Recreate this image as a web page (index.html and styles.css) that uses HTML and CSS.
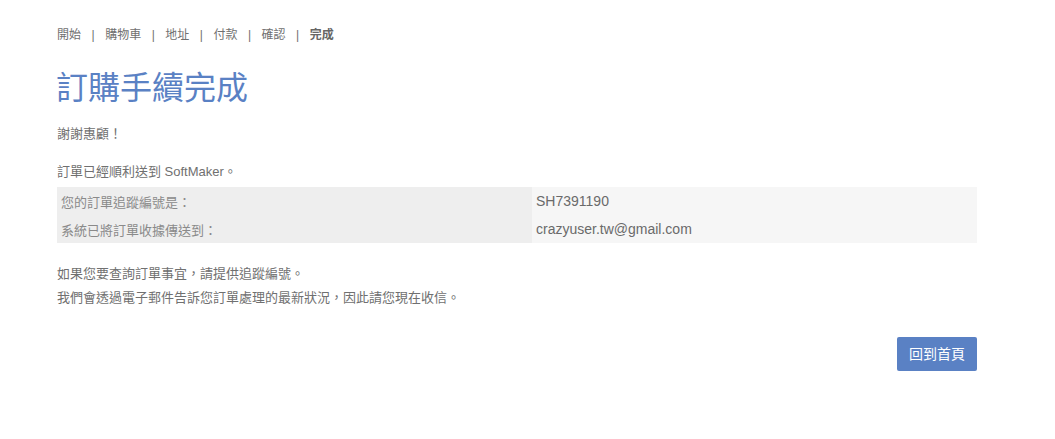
FILE: index.html
```html
<!DOCTYPE html>
<html lang="zh-Hant">
<head>
<meta charset="utf-8">
<title>訂購手續完成</title>
<link rel="stylesheet" href="styles.css">
</head>
<body>
<div class="page">
  <nav class="crumbs">
    <span>開始</span><span class="sep">|</span>
    <span>購物車</span><span class="sep">|</span>
    <span>地址</span><span class="sep">|</span>
    <span>付款</span><span class="sep">|</span>
    <span>確認</span><span class="sep">|</span>
    <span class="current">完成</span>
  </nav>
  <h1 class="title">訂購手續完成</h1>
  <p class="thanks">謝謝惠顧！</p>
  <p class="sent">訂單已經順利送到 SoftMaker。</p>
  <table class="info">
    <tr><td class="label">您的訂單追蹤編號是：</td><td class="value">SH7391190</td></tr>
    <tr><td class="label">系統已將訂單收據傳送到：</td><td class="value">crazyuser.tw@gmail.com</td></tr>
  </table>
  <p class="note">如果您要查詢訂單事宜，請提供追蹤編號。<br>我們會透過電子郵件告訴您訂單處理的最新狀況，因此請您現在收信。</p>
  <div class="actions"><a class="btn" href="#">回到首頁</a></div>
</div>
</body>
</html>
```

FILE: styles.css
```css
html, body {
  margin: 0;
  padding: 0;
  background: #fff;
}
body {
  font-family: "Liberation Sans", "Noto Sans CJK TC", sans-serif;
  color: #707070;
  font-size: 13px;
}
.page {
  width: 920px;
  margin-left: 57px;
  padding-top: 27px;
}
.crumbs {
  font-size: 12px;
  line-height: 16px;
  color: #707070;
  display: flex;
}
.crumbs .sep {
  margin: 0 10.5px;
}
.crumbs .current {
  font-weight: bold;
  color: #666;
}
.title {
  margin: 25px 0 0 -1px;
  font-size: 32px;
  line-height: 40px;
  font-weight: normal;
  color: #5a81c4;
}
.thanks {
  margin: 17px 0 0;
  line-height: 18px;
}
.sent {
  margin: 20px 0 0;
  line-height: 18px;
}
.info {
  margin-top: 6px;
  width: 920px;
  border-collapse: collapse;
}
.info td {
  height: 28px;
  padding: 0 4px;
  vertical-align: middle;
}
.info .label {
  width: 467px;
  background: #eeeeee;
  color: #8a8a8a;
}
.info .value {
  background: #f6f6f6;
  font-size: 14px;
  color: #6a6a6a;
}
.note {
  margin: 19px 0 0;
  line-height: 24px;
}
.actions {
  display: flex;
  justify-content: flex-end;
  margin-top: 27px;
}
.btn {
  display: inline-block;
  background: #5a81c4;
  color: #fff;
  text-decoration: none;
  font-size: 14px;
  line-height: 34px;
  height: 34px;
  padding: 0 12px;
  border-radius: 2px;
}
```
